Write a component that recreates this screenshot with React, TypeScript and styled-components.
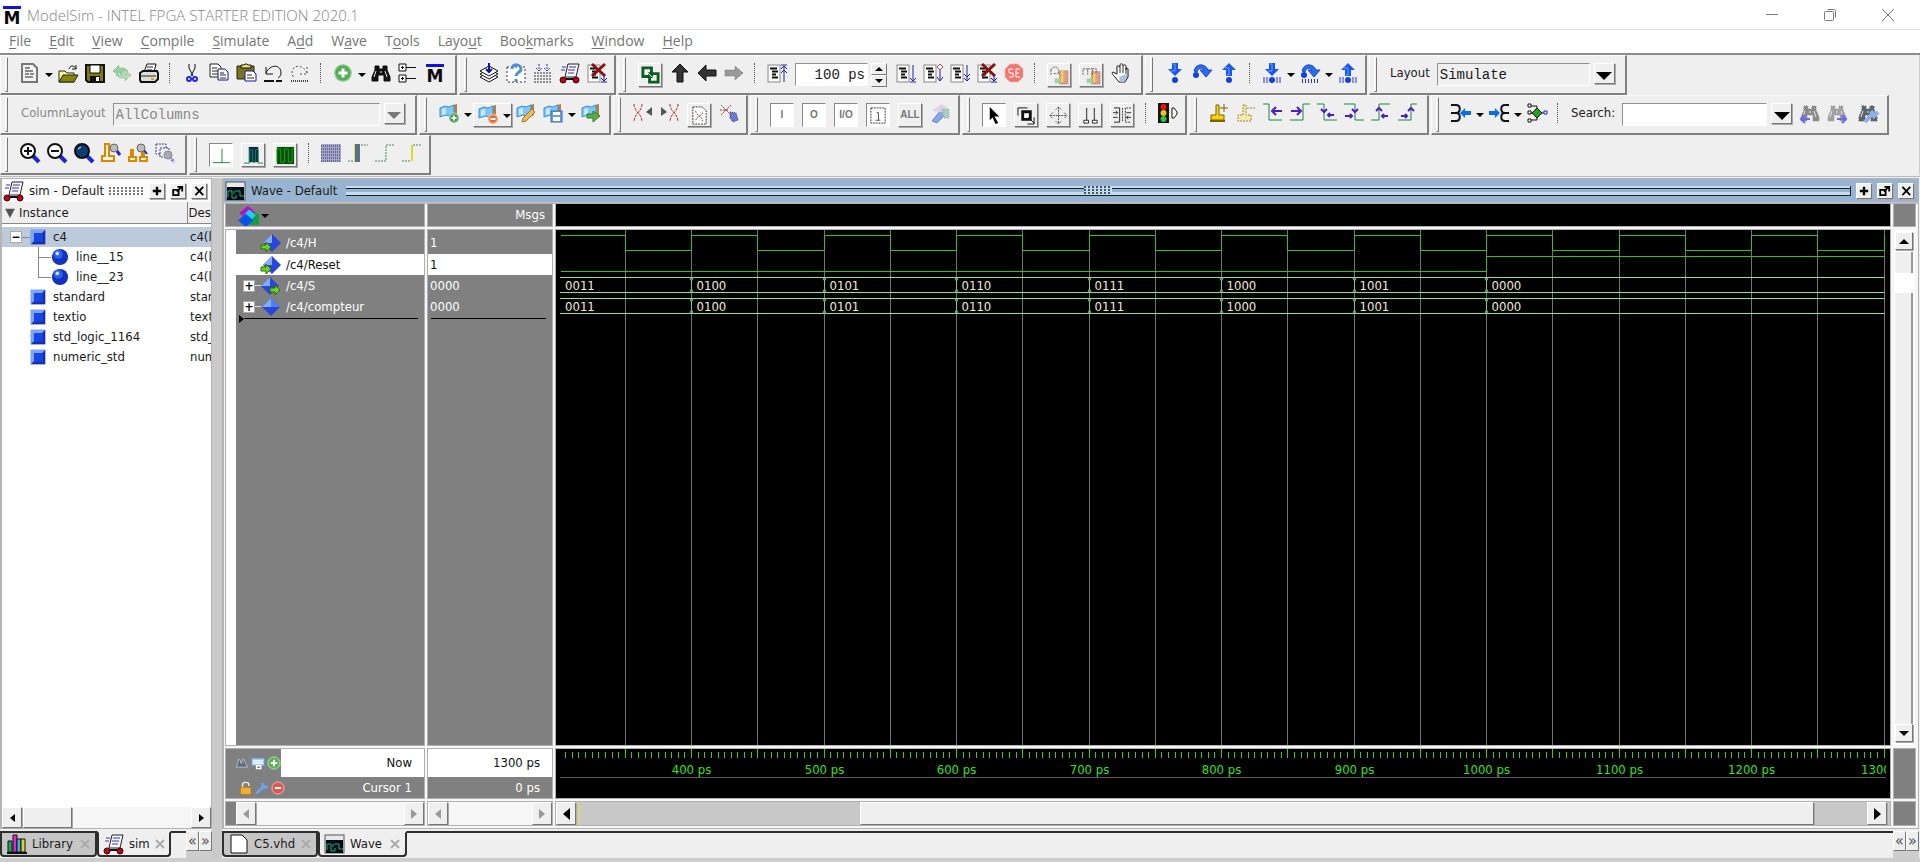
import React from 'react';
import styled, { createGlobalStyle, css } from 'styled-components';

const ui = '"DejaVu Sans Condensed", "DejaVu Sans", sans-serif';
const system = '"Open Sans", "Noto Sans", sans-serif';
const mono = '"Liberation Mono", monospace';

const Global = createGlobalStyle`
  * { box-sizing: border-box; }
  body { margin: 0; background: #efefef; color: #1a1a1a; font: 13px/20px ${ui}; overflow: hidden; }
  button, input, select { font: inherit; color: inherit; margin: 0; padding: 0; border: 0; border-radius: 0; background: none; }
  svg { display: block; flex: none; }
`;

/* ---------- drawings ---------- */

type PProps = { d: string; s?: string; f?: string; w?: number; dash?: string };
const P = ({ d, s = 'none', f = 'none', w = 1, dash }: PProps) => (
  <path d={d} stroke={s} fill={f} strokeWidth={w} strokeDasharray={dash} />
);

const Logo = () => (
  <>
    <rect x="1" y="1" width="18" height="3" fill="#1212e0" />
    <text x="10" y="19" textAnchor="middle" fontFamily="DejaVu Sans, sans-serif" fontWeight="bold" fontSize="17" fill="#0a0a0a">M</text>
  </>
);
const Plus = ({ x = 10, y = 10, r = 8, c = '#55ad55', minus = false }) => (
  <>
    <circle cx={x} cy={y} r={r} fill={c} stroke="#fff" strokeOpacity=".5" />
    <circle cx={x} cy={y} r={r - 1} fill="none" stroke="#fff" strokeOpacity=".35" />
    <path d={`M${x - r / 2} ${y}h${r}${minus ? '' : `M${x} ${y - r / 2}v${r}`}`} stroke="#fff" strokeWidth={r > 6 ? 3 : 2} />
  </>
);
const Listing = () => (
  <>
    <rect x="1" y="2" width="12" height="17" fill="#fafafa" stroke="#8a8a8a" />
    <P d="M3 5.5h7M5 8.5h6M5 11.5h4M5 14.5h6" s="#111" w={2} />
  </>
);
const Binoc = ({ c = '#111', dash = undefined as string | undefined }) => (
  <>
    <path d="M4 3h4v3h4V3h4v4l3 7v4h-6v-6h-6v6H1v-4l3-7z" fill={c} stroke={c} strokeDasharray={dash} />
    <P d="M5 8l-2 6M14 8l2 6M9 9h2" s="#e8e8e8" />
  </>
);
const Book = () => (
  <>
    <path d="M14 2l4-1v11l-4 2z" fill="#b9803c" />
    <path d="M1 5l5-2 4 1 5-2v10l-4 1-4-1-6 2z" fill="#7fc6f5" stroke="#3a8fd0" />
    <path d="M3 6l4-1v6l-4 1z" fill="#c5e8fd" />
  </>
);
const DownArrow = ({ c = '#1a56f0', flip = false }) => (
  <g transform={flip ? 'translate(0 13) scale(1 -1)' : undefined}>
    <path d="M7 0h6v6h4l-7 7-7-7h4z" fill={c} />
    <path d="M8 1h2v7H6" fill="none" stroke="#6aa4ff" />
  </g>
);
const Over = () => (
  <>
    <path d="M2 8C4 0 13 0 16 7h4l-6 7-6-7h4C10 4 6 5 5 9z" fill="#2b6df2" stroke="#1646c8" />
    <circle cx="4" cy="12" r="3" fill="#1540e0" />
  </>
);
const Bars = () => <P d="M2 14v6M5 14v6M15 14v6M18 14v6" s="#2233dd" w={1} />;
const Lens = ({ fill = '#fff' }) => (
  <>
    <P d="M13 13l6 6" s="#1b27d6" w={4} />
    <circle cx="8" cy="8" r="7" fill={fill} stroke="#111" strokeWidth="2" />
  </>
);
const Edge = ({ d, a }: { d: string; a: string }) => (
  <>
    <P d={d} s="#16893c" w={1} />
    <P d={a} s="#4a1fc4" w={2} />
  </>
);
const Waveicon = () => (
  <>
    <rect x="0" y="1" width="19" height="18" fill="#e8e8e8" stroke="#555" />
    <rect x="1" y="6" width="17" height="13" fill="#050a18" />
    <P d="M2 16v-6h4v7h4v-3M9 10h5v5h4M8 10v3" s="#19b36b" w={1} />
  </>
);
const Cart = () => (
  <>
    <path d="M8 1h11l-3 13H5z" fill="#f6f6ff" stroke="#222" strokeWidth="1" />
    <P d="M9 4h7M8 7h7M8 10h6M2 4h4M1 7h4" s="#3434b0" />
    <P d="M1 16h17" s="#111" w={2} />
    <circle cx="3" cy="17" r="3" fill="#c4001c" stroke="#300" />
    <circle cx="16" cy="17" r="3" fill="#c4001c" stroke="#300" />
  </>
);

const icons: Record<string, React.ReactNode> = {
  logo: <Logo />,
  doc: <><P d="M2 1h11l4 4v14H2z" f="#f3f3f3" s="#777" w={2} /><P d="M5 5h5M5 8h8M5 11h4M10 11h4M5 14h8" s="#222" w={1} /></>,
  open: <><P d="M1 8h6l2 2h7v9H1z" f="#fffb9a" s="#222" /><P d="M5 12h15l-4 7H1z" f="#85850a" s="#222" /><P d="M11 6c1-4 5-4 7 0M18 2v4h-4" s="#111" w={1} /></>,
  save: <><P d="M1 2h18v17H3l-2-2z" f="#7d7a12" s="#111" w={2} /><P d="M5 2h10v8H5z" f="#fff" s="#111" /><P d="M5 13h10v6H5z" f="#111" /><P d="M11 14h3v4h-3z" f="#fff" /></>,
  refresh: <><P d="M1 8l6-6v3h5l4 3h-6l2 3H8L6 8v4z" f="#9ccf9f" s="#78b87d" dash="1 1" /><P d="M19 12l-6 6v-3H8l-4-3h6l-2-3h4l2 3V8z" f="#b5dab7" s="#78b87d" dash="1 1" /></>,
  print: <><P d="M5 9l3-8h9l-2 8" f="#fff" s="#111" w={1} /><P d="M1 10l3-2h14l1 2v6l-3 3H2l-1-2z" f="#ddd" s="#111" w={2} /><P d="M1 13h16M8 4h6M8 7h5" s="#222" /><P d="M12 15h3v2h-3z" f="#c9b300" /></>,
  cut: <><P d="M7 1v4l4 8M13 1v4l-4 8" s="#111" w={1} /><circle cx="7" cy="16" r="2" fill="none" stroke="#1c2ce0" strokeWidth="2" /><circle cx="13" cy="16" r="2" fill="none" stroke="#1c2ce0" strokeWidth="2" /></>,
  copy: <><P d="M1 1h8l3 3v10H1z" f="#fff" s="#222" w={1} /><P d="M3 5h5M3 8h6M3 11h6" s="#222" /><P d="M9 6h7l3 3v8H9z" f="#fff" s="#14149a" w={1} /><P d="M11 10h4M11 12h6M11 15h6" s="#222" /></>,
  paste: <><P d="M1 3h17v13H1z" f="#77741c" s="#222" w={1} /><P d="M5 2h3l1-1h2l1 1h3v3H5z" f="#e9e26b" s="#111" /><P d="M9 8h8l3 3v7H9z" f="#fff" s="#14149a" w={1} /><P d="M11 12h5M11 15h7" s="#222" /></>,
  undo: <><P d="M3 4v7h7M3 10c4-9 15-9 15 0 0 2-1 4-3 5" s="#111" w={1} /><P d="M1 18h10M13 18h6" s="#111" w={2} /></>,
  redo: <><P d="M17 4v7h-7M17 10C13 1 2 1 2 10c0 2 1 4 3 5" s="#555" w={1} dash="2 2" /><P d="M1 18h18" s="#444" w={2} dash="1 1" /></>,
  add: <Plus r={9} />,
  binoc: <Binoc />,
  tree: <><P d="M1 1h7v7H1zM1 12h7v7H1z" f="#fff" s="#111" w={1} /><P d="M3 4.500h3M3 15.500h3M4.500 3v3M4.500 14v3M8 4.500h10M8 15.500h10" s="#111" w={1} /></>,
  layers: <><P d="M1 14l9-5 9 5-9 5z" f="#fff" s="#111" w={1} /><P d="M1 11l9-5 9 5-9 5z" f="#fff" s="#111" w={1} /><P d="M1 8l9-5 9 5-9 5z" f="#fff" s="#111" w={1} /><P d="M10 0v9M7 6l3 3 3-3" s="#1414a8" w={2} /></>,
  query: <><P d="M1 4h18v15H1z" f="#fff" s="#333" dash="2 2" w={1} /><P d="M6 6c0-6 9-5 9 0 0 4-5 3-5 7M10 16v3" s="#4b90d8" w={3} /></>,
  load: <><P d="M1 10h18M1 13h18M1 16h18M1 19h18" s="#333" w={1} dash="2 1" /><P d="M6 1v7M3 5l3 3 3-3M14 1v7M11 5l3 3 3-3" s="#2b2bb4" w={1} dash="2 1" /></>,
  cart: <Cart />,
  stopsim: <><Listing /><P d="M5 1l13 12M18 1L5 13" s="#8c1010" w={3} /><P d="M17 12v5M14 15l3 3 3-3M14 19h6" s="#1414a8" w={1} /></>,
  link: <><P d="M2 2h9v9H2z" s="#0b5c20" w={3} /><P d="M9 8h9v9H9z" s="#0b5c20" w={3} /><P d="M6 6l6 6" s="#efefef" w={1} /></>,
  up: <P d="M10 1l8 8h-5v10H7V9H2z" f="#333" s="#111" />,
  left: <P d="M1 10l8-8v5h10v6H9v5z" f="#333" s="#111" />,
  right: <P d="M19 10l-8-7v4H1v6h10v4z" f="#999" s="#777" dash="1 1" />,
  restart: <><Listing /><P d="M17 3v16M14 6l3-3 3 3M14 10l3-3 3 3M14 2h6" s="#2222a8" w={1} /></>,
  run: <><Listing /><P d="M17 2v16M14 15l3 3 3-3M14 19h6" s="#2222a8" w={1} /></>,
  runc: <><Listing /><P d="M17 7v11M14 14l3 4 3-4" s="#2222a8" w={1} /><P d="M17 1l3 3-3 3-3-3z" f="#fff" s="#e04040" /></>,
  runall: <><Listing /><P d="M17 2v16M14 11l3 3 3-3M14 15l3 3 3-3" s="#2222a8" w={1} /></>,
  stop: <><P d="M6 1h8l5 5v8l-5 5H6l-5-5V6z" f="#f0766e" s="#f6b0aa" dash="2 1" /><P d="M9 6H5v4h4v4H5M16 6h-4v8h4M12 10h3" s="#fff" w={1} /></>,
  cover: <><P d="M10 5h9v14h-9z" f="#dba08c" s="#b66" dash="1 1" /><P d="M1 4c3-5 8-3 8 1v4M1 4v5M4 8h4" s="#555" w={1} dash="2 1" /><P d="M13 4v13" s="#f2e23a" w={2} /><P d="M5 13h6v5H5z" f="#9fd29f" /></>,
  memory: <><P d="M10 6h9v13h-9z" f="#dba08c" s="#b66" dash="1 1" /><P d="M1 9V3h5v6M6 3h5v6M11 3h4v5" s="#555" w={1} dash="2 1" /><P d="M13 8v9" s="#f2e23a" w={2} /><P d="M5 13h6v5H5z" f="#9fd29f" /></>,
  hand: <><P d="M6 11L2 9c-2 1 0 3 2 5l4 5h6l3-5V6c-1-2-2-1-2 1V3c-1-2-3-1-3 0V2c-1-2-3-1-3 0v2C7 2 5 3 6 5z" f="#fff" s="#111" w={1} /><P d="M9 4v6M12 3v7M15 7v4" s="#333" /><P d="M8 14l8-3v4l-3 4H9z" f="#a9bfe6" /></>,
  into: <><DownArrow /><circle cx="10" cy="17" r="3" fill="#1540e0" /></>,
  over: <Over />,
  out: <><DownArrow flip /><circle cx="10" cy="17" r="3" fill="#1540e0" /></>,
  intob: <><DownArrow /><Bars /><circle cx="10" cy="17" r="3" fill="#1540e0" /></>,
  overb: <><Over /><P d="M2 18h17" s="#2233dd" w={4} dash="1 2" /></>,
  outb: <><DownArrow flip /><Bars /><circle cx="10" cy="17" r="3" fill="#1540e0" /></>,
  bookadd: <><Book /><Plus x={15} y={15} r={5} c="#2f9440" /></>,
  bookdel: <><Book /><Plus x={15} y={15} r={5} c="#e8692a" minus /></>,
  bookedit: <><Book /><P d="M6 19l1-4 9-9 3 3-9 9z" f="#edbb55" s="#a5762a" /></>,
  booksave: <><Book /><rect x="8" y="8" width="11" height="11" fill="#6e9bdc" stroke="#3d6db5" /><P d="M10 9h7v3h-7zM10 14h7v4h-7z" f="#fff" /></>,
  bookgo: <><Book /><P d="M6 11h6V8l7 5-7 6v-4H6z" f="#57b04a" s="#2f7d2b" /></>,
  delprev: <><P d="M1 1c0 8 8 9 8 18M9 1c0 8-8 9-8 18" s="#b32f2f" w={1} dash="3 1" /><P d="M19 4v9l-6-4z" f="#555" /></>,
  delnext: <><P d="M10 1c0 8 8 9 8 18M18 1c0 8-8 9-8 18" s="#b32f2f" w={1} dash="3 1" /><P d="M1 4v9l6-4z" f="#555" /></>,
  docx: <><P d="M3 1h10l4 4v14H3z" f="#fff" s="#333" dash="2 1" /><P d="M6 5c0 5 7 5 7 11M13 7c0 4-7 3-7 9" s="#b32f2f" w={1} dash="2 1" /></>,
  clear: <><P d="M2 2l10 10M12 2L2 12M1 7h9" s="#963434" w={1} dash="2 1" /><P d="M11 9l6 1 2 7-5 2-3-4z" f="#6b78d8" s="#334" dash="1 1" /></>,
  inout: <><P d="M2 2h15v16H2z" f="#fff" s="#333" w={1} dash="2 1" /><P d="M8 7h2v8M7 15h5" s="#555" w={1} /></>,
  brush: <><P d="M2 18l9-11 5 4-9 9z" f="#89a8ec" s="#6a8ad0" /><P d="M2 8l9-7 6 3-5 5z" f="#e3cfe8" /><P d="M12 6h7v9h-5z" f="#a7d0bb" s="#9ab" dash="1 1" /></>,
  arrow: <P d="M5 1l10 10h-5l4 7-3 1-3-7-3 3z" f="#000" />,
  zoomsel: <><P d="M1 10V2h10" s="#111" w={1} /><P d="M6 6h8v8H6z" f="#fff" s="#111" w={3} /><P d="M12 12l6 6M18 12v7h-7" s="#111" w={1} /></>,
  pan: <P d="M10 1v18M1 10h18M7 4l3-3 3 3M7 16l3 3 3-3M4 7l-3 3 3 3M16 7l3 3-3 3" s="#444" w={1} dash="2 1" />,
  cursors: <><P d="M6 2v13M14 2v13" s="#222" w={1} /><P d="M3 15h5v3H3zM12 15h5v3h-5z" f="#fff" s="#222" w={1} /></>,
  expand: <><P d="M1 2h6v15H1" s="#222" w={1} /><P d="M19 2h-6v15h6M10 2v15" s="#333" w={1} dash="2 1" /><P d="M0 7h5M0 12h5M14 7h5M14 12h5M3 5l2 2-2 2M16 10l-2 2 2 2" s="#333" w={1} /></>,
  traffic: <><rect x="0" y="0" width="11" height="20" fill="#151515" /><circle cx="5.5" cy="4" r="3" fill="#e11" /><circle cx="5.5" cy="10" r="3" fill="#e8c020" /><circle cx="5.5" cy="16" r="3" fill="#2cc24c" /><P d="M14 5h2l3 4v2l-3 4h-2z" f="#fff" s="#111" /></>,
  inscur: <><P d="M7 2h3v10h5v5H2v-5h5z" f="#f2d410" s="#806000" /><P d="M1 17h15v2H1z" f="#806000" /><P d="M11 5h8M15 1v8" s="#806000" w={1} /></>,
  delcur: <><P d="M7 2h3v10h5v6H2v-6h5z" f="#f3ebb0" s="#a08a30" dash="2 1" /><P d="M11 5h8" s="#a08a30" w={1} dash="2 1" /></>,
  prevt: <Edge d="M0 1h6v16h13" a="M19 8h-9M13 4l-4 4 4 4" />,
  nextt: <Edge d="M0 17h13V1h7" a="M1 8h9M7 4l4 4-4 4" />,
  prevf: <Edge d="M0 1h7v16h13" a="M4 6l3 3 3-3M17 12h-6M13 10l-2 2 2 2" />,
  nextf: <Edge d="M0 1h11v16h9" a="M8 6l3 3 3-3M1 13h7M6 11l2 2-2 2" />,
  prevr: <Edge d="M0 17h8V1h11" a="M5 8l3-3 3 3M17 13h-6M13 11l-2 2 2 2" />,
  nextr: <Edge d="M0 17h13V1h6" a="M10 8l3-3 3 3M3 13h6M7 11l2 2-2 2" />,
  drivers: <><P d="M0 2h5c5 0 5 8 0 8H0M5 10c5 0 5 8 0 8H0" s="#111" w={2} /><P d="M9 10l5-5v3h6v4h-6v3z" f="#0b6cf0" /></>,
  readers: <><P d="M20 2h-4c-5 0-5 8 0 8h4M16 10c-5 0-5 8 0 8h4" s="#111" w={2} /><P d="M11 10L6 5v3H0v4h6v3z" f="#0b6cf0" /></>,
  net: <><P d="M4 3h6v14H4M4 10h13" s="#111" w={1} /><P d="M1 1h3v3H1zM1 8h3v3H1zM1 16h3v3H1z" f="#fff" s="#111" /><P d="M10 5l5 5-5 5-5-5z" f="#1fa31f" s="#111" /><P d="M17 8h3v3h-3z" f="#fff" s="#12c" /></>,
  findprev: <><Binoc c="#8a8a8a" dash="1 1" /><P d="M10 16H2M5 12l-4 4 4 4" s="#6a6ae8" w={2} /></>,
  findnext: <><Binoc c="#a0a0a0" dash="1 1" /><P d="M10 16h8M15 12l4 4-4 4" s="#6a6ae8" w={2} /></>,
  findopt: <><Binoc c="#5c646c" dash="2 1" /><P d="M7 19l7-8M13 8l3 5 4-4" s="#8fb2e6" w={4} /></>,
  zin: <><Lens /><P d="M4 8h8M8 4v8" s="#111" w={2} /></>,
  zout: <><Lens /><P d="M4 8h8" s="#111" w={2} /></>,
  zfull: <><Lens fill="#0c3c74" /><P d="M4 6l3-2" s="#fff" /></>,
  zcur: <><P d="M4 1h4v12h5v5H1v-5h3z" f="#f8efe0" s="#d78a00" w={2} /><P d="M16 8l3 4" s="#1b27d6" w={3} /><circle cx="13" cy="5" r="4" fill="#bbb" stroke="#666" /></>,
  zbetw: <><P d="M3 7h2v7h3v4H1v-4h2zM14 7h2v7h3v4h-7v-4h2z" f="#f8efe0" s="#d78a00" w={2} /><P d="M16 7l3 4" s="#1b27d6" w={2} /><circle cx="13" cy="5" r="4" fill="#bbb" stroke="#666" /></>,
  zrect: <><P d="M1 1h10v4M1 1v10h4" s="#3a3aa8" w={1} dash="2 1" /><P d="M5 5h9v9H5z" s="#3a3aa8" w={1} dash="2 1" /><P d="M15 14l4 5" s="#6a6ae8" w={3} dash="2 1" /><circle cx="13" cy="12" r="4" fill="#aaa" stroke="#888" /></>,
  wlit: <P d="M1 17.500h18M10.500 3v15" s="#16893c" w={1} />,
  wlog: <><rect x="5" y="1" width="10" height="16" fill="#10285c" /><P d="M0 18h6V4h3v13h3V4h3v14h5" s="#16893c" w={1} /></>,
  wevt: <><rect x="1" y="1" width="18" height="18" fill="#045004" /><P d="M1 17V3h4v14h4V3h4v14h4V3h2" s="#1aa31a" w={1} /></>,
  e1: <><rect x="0" y="1" width="20" height="18" fill="#a6a6c8" /><P d="M0 3h20M0 6h20M0 9h20M0 12h20M0 15h20M0 18h20" s="#66669a" dash="1 1" w={2} /></>,
  e2: <><P d="M0 18h6M13 2h7" s="#3b8a60" w={1} dash="2 1" /><rect x="7" y="1" width="5" height="18" fill="#55708c" /><P d="M6.500 1v18" s="#e6e040" /></>,
  e3: <P d="M0 18h11V2h8" s="#3b8a60" w={1} dash="2 1" />,
  e4: <><P d="M0 18h9M11 2h8" s="#3b8a60" w={1} dash="2 1" /><P d="M10 2v16" s="#dcdc20" w={2} /></>,
  wave: <Waveicon />,
  books: <><P d="M1 18V7h4v11z" f="#1aa85c" s="#111" w={1} /><P d="M6 18V1h4v17z" f="#e428c8" s="#111" w={1} /><P d="M10 18V5h4v13z" f="#31b5e8" s="#111" w={1} /><P d="M14 5h4v13h-4z" f="#e0d030" s="#111" w={1} /><P d="M0 19h20" s="#111" w={2} /></>,
  page: <P d="M2 1h11l5 5v13H2z" f="#fff" s="#111" w={1} />,
  min: <P d="M4 9.500h12" s="#777" />,
  max: <><rect x="4.500" y="6.500" width="9" height="9" rx="1" fill="none" stroke="#777" /><P d="M7.500 4.500h6c2 0 2 1 2 2v6" s="#777" /></>,
  close: <P d="M4 4l12 12M16 4L4 16" s="#777" />,
  filter: <P d="M3 4h14l-7 13z" f="#555" />,
  diamonds: <><P d="M10 1l7 6-8 6-7-6z" f="#b311c8" /><P d="M13 8h7v10h-9z" f="#0fa046" /><P d="M11 4l6 5-5 6-6-6z" f="#19d3ea" /><P d="M8 8l7 6-7 6-7-6z" f="#0a52e8" /></>,
  diamond: <><P d="M10 1l9 9-9 9-9-9z" f="#2846d8" /><P d="M10 1l9 9h-9z" f="#4c83f2" /><P d="M10 1v9H1z" f="#86aef8" /></>,
  sigin: <><P d="M11 1l9 9-9 9-9-9z" f="#2846d8" /><P d="M11 1v9H2z" f="#86aef8" /><P d="M0 12h5V9l5 5-5 5v-3H0z" f="#6bd31c" s="#2c6b10" /></>,
  sigout: <><P d="M9 1l9 9-9 9-9-9z" f="#2846d8" /><P d="M9 1v9H0z" f="#86aef8" /><P d="M9 12h5V9l5 5-5 5v-3H9z" f="#6bd31c" s="#2c6b10" /></>,
  block: <><rect x="1" y="1" width="18" height="18" fill="#2a5bea" /><P d="M19 1v18H1l4-4h10V5z" f="#1a2fa8" /><P d="M1 19V1h18l-4 4H5v10z" f="#7ba4f6" /><rect x="5" y="5" width="11" height="11" fill="#1547e4" /></>,
  ball: <><circle cx="10" cy="10" r="9" fill="#1432c0" /><circle cx="8" cy="7" r="5" fill="#2d62ee" /><circle cx="7" cy="6" r="2" fill="#cfe0ff" /></>,
  unlock: <><P d="M5 9V5c0-4 9-4 9 0v2" s="#eee" w={2} /><rect x="2" y="9" width="15" height="10" fill="#f1b033" stroke="#b87c14" /></>,
  wrench: <P d="M2 18L12 8M11 3c-1 5 3 8 7 4" s="#6ba5f0" w={4} />,
  minus: <Plus r={9} c="#e0544c" minus />,
  plus: <Plus r={9} c="#58b04e" />,
  sheet: <><rect x="1" y="3" width="18" height="11" fill="#a9cdf5" stroke="#5c8fd0" /><P d="M3 7h14M3 10h14M8 14h6v4H8z" s="#fff" w={2} /></>,
  cfg: <P d="M2 16l3-11h2l2 6 3-7 6 12z" f="#5e6b80" s="#cfd6df" />,
  winplus: <P d="M10 3v14M3 10h14" s="#000" w={4} />,
  winout: <><P d="M2 8h9v9H2z" s="#000" w={3} /><P d="M8 11l8-8M9 3h8v8" s="#000" w={3} /></>,
  winx: <P d="M4 3l13 14M17 3L4 17" s="#000" w={3} />,
};

const Icon = ({ name, size = 20 }: { name: string; size?: number }) => (
  <svg width={size} height={size} viewBox="0 0 20 20" overflow="visible" aria-hidden="true">{icons[name]}</svg>
);

/* ---------- shared controls ---------- */

const raised = css`
  background: #efefef;
  border: 1px solid;
  border-color: #fff #777 #777 #fff;
  box-shadow: 1px 1px 0 #aaa;
`;

const Tri = styled.span<{ $dir?: 'up' | 'down' | 'left' | 'right'; $size?: number; $color?: string }>`
  display: block;
  width: 0;
  height: 0;
  border: ${(p) => p.$size ?? 5}px solid transparent;
  ${(p) => {
    const c = p.$color ?? '#000';
    const n = p.$size ?? 5;
    switch (p.$dir) {
      case 'up': return `border-bottom-color:${c};border-top-width:0;`;
      case 'left': return `border-right-color:${c};border-left-width:0;border-right-width:${n + 1}px;`;
      case 'right': return `border-left-color:${c};border-right-width:0;border-left-width:${n + 1}px;`;
      default: return `border-top-color:${c};border-bottom-width:0;`;
    }
  }}
`;

const SquareButton = styled.button`
  ${raised}
  display: flex;
  align-items: center;
  justify-content: center;
  flex: none;
  align-self: stretch;
  width: 20px;
`;

/* ---------- title and menu ---------- */

const Shell = styled.div`
  display: flex;
  flex-direction: column;
  height: 100vh;
  min-height: 480px;
  background: #efefef;
`;
const TitleBar = styled.header`
  display: flex;
  align-items: center;
  flex: none;
  height: 29px;
  padding: 0 3px 0 2px;
  background: #fff;
  color: #858585;
  font: 300 15px/28px ${system};
`;
const Title = styled.h1`
  flex: 1;
  margin: 0 0 0 5px;
  font: inherit;
`;
const WinButton = styled.button`
  display: flex;
  justify-content: center;
  width: 58px;
`;
const Menu = styled.nav`
  display: flex;
  flex: none;
  gap: 18px;
  height: 26px;
  padding-left: 9px;
  border-top: 1px solid #ddd;
  border-bottom: 2px solid #8c8c8c;
  background: #fff;
`;
const MenuItem = styled.button`
  height: 22px;
  color: #757575;
  font: 14px/20px ${system};
  u { text-underline-offset: 2px; }
`;

/* ---------- toolbars ---------- */

const Toolbars = styled.section`
  display: flex;
  flex-direction: column;
  flex: none;
  border-right: 1px solid #ccc;
`;
const BarRow = styled.div`
  display: flex;
  gap: 2px;
  height: 40px;
`;
const Group = styled.div<{ $w: number }>`
  display: flex;
  align-items: flex-start;
  flex: none;
  width: ${(p) => p.$w}px;
  padding-top: 7px;
  border: solid;
  border-width: 1px 2px 2px 1px;
  border-color: #fafafa #808080 #808080 #fafafa;
`;
const Grip = styled.span`
  width: 3px;
  height: 35px;
  margin: -6px 8px 0 4px;
  flex: none;
  border: 1px solid;
  border-color: #fff #777 #777 #fff;
`;
const Tool = styled.button<{ $look?: 'raised' | 'pressed' }>`
  display: flex;
  align-items: center;
  justify-content: center;
  flex: none;
  width: 27px;
  height: 20px;
  ${(p) => p.$look && css`
    width: 24px;
    height: 24px;
    margin: 0 4px;
  `}
  ${(p) => p.$look === 'raised' && raised}
  ${(p) => p.$look === 'pressed' && css`
    background: #fff;
    border: 1px solid;
    border-color: #888 #fff #fff #888;
  `}
`;
const ToolText = styled.span`
  color: #777;
  font: bold 10px/12px "Liberation Sans", sans-serif;
`;
const Caret = styled.button`
  display: flex;
  align-items: center;
  justify-content: center;
  flex: none;
  width: 11px;
  height: 23px;
`;
const Split = styled.div`
  ${raised}
  display: flex;
  width: 39px;
  height: 24px;
`;
const Sep = styled.span`
  flex: none;
  width: 1px;
  height: 20px;
  margin: 0 8px 0 7px;
  border-left: 1px dotted #555;
`;
const sunk = css`
  border: 1px solid;
  border-color: #909090 #fff #fff #909090;
`;
const Field = styled.input<{ $w: number; $right?: boolean }>`
  ${sunk}
  width: ${(p) => p.$w}px;
  height: 23px;
  padding: 0 2px;
  background: #fff;
  font: 14px/20px ${mono};
  text-align: ${(p) => (p.$right ? 'right' : 'left')};
`;
const Select = styled.select<{ $w: number }>`
  ${sunk}
  appearance: none;
  width: ${(p) => p.$w}px;
  height: 23px;
  padding: 0 2px;
  font: 14px/20px ${mono};
  &:disabled { color: #888; opacity: 1; }
`;
const DropButton = styled.button`
  ${raised}
  display: flex;
  align-items: center;
  justify-content: center;
  width: 21px;
  height: 21px;
  margin-left: 4px;
  padding-top: 4px;
`;
const Label = styled.label<{ $dim?: boolean }>`
  margin: 0 7px 0 5px;
  color: ${(p) => (p.$dim ? '#888' : '#222')};
`;
const Spin = styled.span`
  display: flex;
  flex-direction: column;
  width: 16px;
  height: 24px;
  margin: 0 5px 0 3px;
  button { ${raised} display: flex; align-items: center; justify-content: center; flex: 1; box-shadow: none; }
`;

/* Each word is an icon; "|" a divider, "v" a caret, "+" a raised and "_" a pressed button. */
const Tools = ({ items }: { items: string }) => (
  <>
    {items.split(' ').map((it, i) => {
      if (it === '|') return <Sep key={i} />;
      if (it === 'v') return <Caret key={i} aria-label="More"><Tri $size={4} /></Caret>;
      const look = it[0] === '+' ? 'raised' : it[0] === '_' ? 'pressed' : undefined;
      const name = look ? it.slice(1) : it;
      return (
        <Tool key={i} $look={look} aria-label={name}>
          {icons[name] ? <Icon name={name} size={look ? 19 : 20} /> : <ToolText>{name}</ToolText>}
        </Tool>
      );
    })}
  </>
);

/* ---------- workspace ---------- */

const Work = styled.main`
  display: flex;
  flex: 1;
  min-height: 0;
  padding: 1px 1px 0 0;
  margin-top: 1px;
  border-top: 1px solid #bbb;
  background: #efefef;
`;
const Side = styled.div`
  display: flex;
  flex-direction: column;
  flex: none;
  width: 212px;
`;
const Splitter = styled.div`
  flex: none;
  width: 10px;
  background: #cacaca;
`;
const Right = styled.div`
  display: flex;
  flex-direction: column;
  flex: 1;
  min-width: 0;
`;
const Panel = styled.section`
  display: flex;
  flex-direction: column;
  flex: 1;
  min-height: 0;
  margin-bottom: 2px;
  border: solid #b4b4b4;
  border-width: 1px 1px 1px 2px;
  background: #fff;
`;
const PanelTitle = styled.div<{ $active?: boolean }>`
  display: flex;
  align-items: center;
  flex: none;
  height: 23px;
  padding: 0 4px 0 2px;
  gap: 5px;
  background: ${(p) => (p.$active ? '#99b4d1' : '#fbfbfb')};
  white-space: nowrap;
`;
const TitleButtons = styled.span`
  display: flex;
  gap: 5px;
  button { ${raised} display: flex; align-items: center; justify-content: center; width: 16px; height: 16px; }
`;
const GripDots = styled.span`
  flex: 1;
  height: 8px;
  background: radial-gradient(circle at 1px 1px, #777 1px, transparent 1px) 0 0 / 4px 3px;
`;
const GripLines = styled.span`
  display: flex;
  align-items: center;
  justify-content: center;
  flex: 1;
  height: 10px;
  margin-left: 4px;
  border: solid #16222e;
  border-width: 0 1px 1px 0;
  background: linear-gradient(#c4def0 0 2px, #16222e 2px 3px, #99b4d1 3px 6px, #c4def0 6px 9px);
  i { width: 28px; height: 9px; background: radial-gradient(circle at 1px 1px, #456 1px, #c4def0 1px) 0 0 / 4px 3px; }
`;
const PanelButtons = () => (
  <TitleButtons>
    <button aria-label="Maximize"><Icon name="winplus" size={12} /></button>
    <button aria-label="Undock"><Icon name="winout" size={12} /></button>
    <button aria-label="Close"><Icon name="winx" size={12} /></button>
  </TitleButtons>
);

const TreeWrap = styled.div`
  flex: 1;
  min-height: 0;
  overflow: hidden;
`;
const Tree = styled.table`
  width: 100%;
  table-layout: fixed;
  border-collapse: collapse;
  th {
    padding: 0 0 0 1px;
    border: solid #888;
    border-width: 0 0 1px 1px;
    background: #efefef;
    font-weight: normal;
    text-align: left;
    overflow: hidden;
  }
  th:first-child { width: 185px; border-left: 0; }
  td { height: 20px; padding: 0 0 0 3px; overflow: hidden; white-space: nowrap; }
  td:first-child { padding: 0; }
  tbody::before { content: ''; display: block; height: 3px; }
`;
const Cell = styled.div`
  display: flex;
  align-items: center;
  height: 20px;
`;
const HeadCell = styled(Cell)`
  height: 21px;
  svg { margin-right: 2px; }
`;
const TreeRow = styled.tr<{ $on?: boolean }>`
  background: ${(p) => (p.$on ? '#bccada' : 'transparent')};
`;
const Expander = styled.button`
  width: 12px;
  height: 12px;
  flex: none;
  border: 1px solid #aaa;
  background: #fff;
  color: #000;
  font: bold 12px/8px ${ui};
`;
const Stub = styled.span<{ $w: number; $color?: string }>`
  flex: none;
  width: ${(p) => p.$w}px;
  height: 1px;
  background: ${(p) => p.$color ?? '#888'};
`;
const Branch = styled.span<{ $last?: boolean }>`
  align-self: flex-start;
  flex: none;
  width: 13px;
  height: ${(p) => (p.$last ? 11 : 20)}px;
  margin-left: 36px;
  border-left: 1px solid #888;
  background: linear-gradient(#888, #888) 0 10px / 12px 1px no-repeat;
`;
const Indent = styled.span<{ $w: number }>`
  flex: none;
  width: ${(p) => p.$w}px;
`;
const Name = styled.span<{ $gap?: number }>`
  margin-left: ${(p) => p.$gap ?? 7}px;
  white-space: nowrap;
`;

const Scroll = styled.div<{ $tone?: string; $h?: number; $end?: number }>`
  display: flex;
  flex: none;
  height: ${(p) => p.$h ?? 21}px;
  padding-right: ${(p) => p.$end ?? 0}px;
  background: ${(p) => p.$tone ?? '#f6f6f6'};
`;
const Track = styled.div<{ $from?: string; $to?: string }>`
  flex: 1;
  display: flex;
  padding: 0 ${(p) => p.$to ?? '0'} 0 ${(p) => p.$from ?? '0'};
`;
const Thumb = styled.div`
  ${raised}
  flex: 1;
`;
const YellowMark = styled.span`
  width: 2px;
  margin-left: 2px;
  background: #e0d27a;
`;

/* ---------- tabs ---------- */

const TabStrip = styled.div`
  display: flex;
  flex: none;
  height: 27px;
  background: #cdcdcd;
`;
const TabFill = styled.div`
  display: flex;
  flex: 1;
  border-top: 2px solid #2e2e2e;
  background: #efefef;
  min-width: 0;
`;
const Tab = styled.button<{ $on?: boolean; $w: number }>`
  display: flex;
  align-items: center;
  gap: 5px;
  flex: none;
  width: ${(p) => p.$w}px;
  height: 26px;
  margin-top: -2px;
  padding: 0 5px;
  border: 2px solid #2e2e2e;
  border-top-color: ${(p) => (p.$on ? '#efefef' : '#2e2e2e')};
  border-radius: 0 0 4px 4px;
  background: ${(p) => (p.$on ? '#efefef' : '#c6c6c6')};
  white-space: nowrap;
  svg:last-child { margin-left: auto; }
`;
const Steps = styled.span`
  display: flex;
  flex: none;
  height: 20px;
  button { ${raised} width: 13px; color: #555; font: 16px/14px ${ui}; box-shadow: none; }
`;
const TabX = () => (
  <svg width="10" height="10" viewBox="0 0 10 10" aria-hidden="true"><path d="M1 1l8 8M9 1L1 9" stroke="#aaa" strokeWidth="2" /></svg>
);
const Bottom = styled.footer`
  flex: none;
  height: 4px;
  background: #cdcdcd;
`;

/* ---------- wave window ---------- */

const WaveGrid = styled.div`
  display: grid;
  flex: 1;
  min-height: 0;
  grid-template-columns: 198px 124px minmax(0, 1fr) 21px;
  grid-template-rows: 22px minmax(0, 1fr) 49px 23px;
  gap: 4px;
  padding: 0 3px 3px 2px;
  border-top: 2px solid #c4c4c4;
  background: #f6f6f6;
`;
const Pane = styled.div<{ $bg?: string; $strip?: boolean }>`
  display: flex;
  flex-direction: column;
  min-width: 0;
  overflow: hidden;
  background: ${(p) => p.$bg ?? '#808080'};
  border-left: ${(p) => (p.$strip ? '10px solid #fff' : '0')};
  outline: 1px solid #b0b0b0;
  color: #fff;
`;
const PaneHead = styled.div<{ $end?: boolean }>`
  display: flex;
  align-items: center;
  justify-content: ${(p) => (p.$end ? 'flex-end' : 'flex-start')};
  height: 23px;
  padding: 0 7px 0 11px;
`;
const Signal = styled.div<{ $on?: boolean; $value?: boolean }>`
  display: flex;
  align-items: center;
  flex: none;
  height: 21px;
  padding-left: ${(p) => (p.$value ? 2 : 7)}px;
  background: ${(p) => (p.$on ? '#fff' : 'transparent')};
  color: ${(p) => (p.$on ? '#111' : '#fff')};
  &:first-child { height: 24px; padding-top: 2px; }
`;
const EndLine = styled.div`
  display: flex;
  align-items: center;
  height: 3px;
  padding: 0 6px 0 3px;
  &::after { content: ''; flex: 1; height: 1px; background: #000; }
`;
const NowRow = styled.div<{ $light?: boolean }>`
  display: flex;
  align-items: center;
  flex: ${(p) => (p.$light ? '0 0 28px' : '1')};
  background: ${(p) => (p.$light ? '#fff' : '#808080')};
  color: ${(p) => (p.$light ? '#111' : '#fff')};
`;
const NowTools = styled.span`
  display: flex;
  align-items: center;
  align-self: stretch;
  gap: 2px;
  width: 55px;
  padding-left: 9px;
  background: #808080;
`;
const NowText = styled.span`
  flex: 1;
  padding-right: 12px;
  text-align: right;
`;
const VScroll = styled.div`
  display: flex;
  flex-direction: column;
  align-items: stretch;
  background: #fff;
  padding: 2px 2px 3px 1px;
  button { ${raised} display: flex; align-items: center; justify-content: center; flex: none; height: 18px; }
`;
const VBlock = styled.div<{ $h?: number }>`
  flex: ${(p) => (p.$h ? `0 0 ${p.$h}px` : '1')};
  background: #efefef;
  border-right: 2px solid #999;
  &:first-of-type { margin: 2px 0 20px; }
`;

/* The time axis: 400 ps sits 135px from the pane's left edge, 50 ps take 66.25px. */
const X = (t: number) => Math.round(135 + (t - 400) * 1.325) + 0.5;
const range = (a: number, b: number, step: number) => {
  const out: number[] = [];
  for (let t = a; t <= b; t += step) out.push(t);
  return out;
};
const clock = range(350, 1300, 50).map((t) => `H${X(t)}V${(t / 50) % 2 ? 20.5 : 5.5}`).join('');
const busValues = ['0011', '0100', '0101', '0110', '0111', '1000', '1001', '0000'];

const Bus = ({ y }: { y: number }) => (
  <g>
    <path d={`M4 ${y}.5H${X(1300)}M4 ${y + 15}.5H${X(1300)}`} stroke="#8fe08f" />
    {busValues.map((v, i) => (
      <React.Fragment key={v}>
        {i > 0 && (
          <path
            d={`M${X(300 + i * 100) - 2} ${y}l2 4v8l-2 4M${X(300 + i * 100) + 2} ${y}l-2 4v8l2 4`}
            stroke="#7fc890" fill="none"
          />
        )}
        <text x={i ? X(300 + i * 100) + 5 : 9} y={y + 13} fill="#f2ead8">{v}</text>
      </React.Fragment>
    ))}
  </g>
);
const Plot = () => (
  <svg width="100%" height="100%" fontFamily={ui} fontSize="13">
    {range(350, 1300, 50).map((t) => <line key={t} x1={X(t)} x2={X(t)} y1="0" y2="100%" stroke="#737373" />)}
    <path d={`M5 5.500${clock}`} stroke="#33c416" fill="none" />
    <path d={`M${X(1300)} 20V5`} stroke="#33c416" />
    <path d={`M5 41.500H${X(1000)}V26.500H${X(1300)}`} stroke="#33c416" fill="none" />
    <Bus y={47} />
    <Bus y={68} />
  </svg>
);
const AxisBox = styled.div`
  flex: 1;
  margin-right: 4px;
  overflow: hidden;
`;
const Axis = () => (
  <AxisBox>
    <svg width="100%" height="49" fontFamily={ui} fontSize="13">
      {range(305, 1300, 5).map((t) => (
        <line key={t} x1={X(t)} x2={X(t)} y1={t % 50 ? 3 : 0} y2="9" stroke="#2fd016" />
      ))}
      {range(400, 1300, 100).map((t) => (
        <text key={t} x={X(t)} y="25" textAnchor="middle" fill="#35e01c">{t} ps</text>
      ))}
      <line x1="4" x2="100%" y1="28.500" y2="28.500" stroke="#5c5c5c" />
    </svg>
  </AxisBox>
);

const menus: [string, string, string][] = [
  ['', 'F', 'ile'], ['', 'E', 'dit'], ['', 'V', 'iew'], ['', 'C', 'ompile'], ['', 'S', 'imulate'], ['A', 'd', 'd'],
  ['W', 'a', 've'], ['T', 'o', 'ols'], ['Layo', 'u', 't'], ['Boo', 'k', 'marks'], ['', 'W', 'indow'], ['', 'H', 'elp'],
];

const HBar = () => (
  <Scroll $h={23}>
    <SquareButton aria-label="Scroll left"><Tri $dir="left" $color="#999" /></SquareButton>
    <Track />
    <SquareButton aria-label="Scroll right"><Tri $dir="right" $color="#999" /></SquareButton>
  </Scroll>
);

const TabSteps = () => (
  <Steps>
    <button aria-label="Previous tab">«</button>
    <button aria-label="Next tab">»</button>
  </Steps>
);

export default function App() {
  return (
    <Shell>
      <Global />
      <TitleBar>
        <Icon name="logo" />
        <Title>ModelSim - INTEL FPGA STARTER EDITION 2020.1</Title>
        <WinButton aria-label="Minimize"><Icon name="min" /></WinButton>
        <WinButton aria-label="Restore"><Icon name="max" /></WinButton>
        <WinButton aria-label="Close"><Icon name="close" /></WinButton>
      </TitleBar>
      <Menu>
        {menus.map(([a, u, b]) => <MenuItem key={a + u + b}>{a}<u>{u}</u>{b}</MenuItem>)}
      </Menu>

      <Toolbars>
        <BarRow>
          <Group $w={457}><Grip /><Tools items="doc v open save refresh print | cut copy paste undo redo | add v binoc tree logo" /></Group>
          <Group $w={157}><Grip /><Tools items="layers query load cart stopsim" /></Group>
          <Group $w={525}>
            <Grip />
            <Tools items="+link up left right | restart" />
            <Indent $w={5} />
            <Field $w={73} $right defaultValue="100 ps" aria-label="Run length" />
            <Spin>
              <button aria-label="Increase"><Tri $dir="up" $size={4} /></button>
              <button aria-label="Decrease"><Tri $size={4} /></button>
            </Spin>
            <Tools items="run runc runall stopsim stop | +cover +memory hand" />
          </Group>
          <Group $w={222}><Grip /><Tools items="into over out | intob v overb v outb" /></Group>
          <Group $w={258}>
            <Grip />
            <Label htmlFor="layout">Layout</Label>
            <Select id="layout" $w={153} defaultValue="Simulate"><option>Simulate</option></Select>
            <DropButton aria-label="Open layouts"><Tri $size={8} /></DropButton>
          </Group>
        </BarRow>
        <BarRow>
          <Group $w={417}>
            <Grip />
            <Label htmlFor="columns" $dim>ColumnLayout</Label>
            <Select id="columns" $w={267} disabled defaultValue="AllColumns"><option>AllColumns</option></Select>
            <DropButton aria-label="Open columns"><Tri $size={7} $color="#777" /></DropButton>
          </Group>
          <Group $w={192}>
            <Grip />
            <Tools items="bookadd v" />
            <Split><Tools items="bookdel v" /></Split>
            <Tools items="bookedit booksave v bookgo" />
          </Group>
          <Group $w={135}><Grip /><Tools items="delprev delnext +docx clear" /></Group>
          <Group $w={210}><Grip /><Tools items="_I _O _I/O _inout +ALL brush" /></Group>
          <Group $w={225}><Grip /><Tools items="_arrow +zoomsel +pan +cursors +expand | traffic" /></Group>
          <Group $w={240}><Grip /><Tools items="inscur delcur prevt nextt prevf nextf prevr nextr" /></Group>
          <Group $w={458}>
            <Grip />
            <Tools items="drivers v readers v net |" />
            <Label htmlFor="search">Search:</Label>
            <Field id="search" $w={145} />
            <DropButton aria-label="Search history"><Tri $size={8} /></DropButton>
            <Indent $w={4} />
            <Tools items="findprev findnext" />
            <Indent $w={4} />
            <Tools items="findopt" />
          </Group>
        </BarRow>
        <BarRow>
          <Group $w={187}><Grip /><Tools items="zin zout zfull zcur zbetw zrect" /></Group>
          <Group $w={242}><Grip /><Tools items="_wlit +wlog +wevt | e1 e2 e3 e4" /></Group>
        </BarRow>
      </Toolbars>

      <Work>
        <Side>
          <Panel>
            <PanelTitle><Icon name="cart" />sim - Default<GripDots /><PanelButtons /></PanelTitle>
            <TreeWrap>
              <Tree>
                <thead>
                  <tr>
                    <th><HeadCell><Icon name="filter" size={14} />Instance</HeadCell></th>
                    <th>Des</th>
                  </tr>
                </thead>
                <tbody>
                  <TreeRow $on>
                    <td><Cell><Indent $w={8} /><Expander aria-label="Collapse">−</Expander><Stub $w={8} /><Icon name="block" size={16} /><Name>c4</Name></Cell></td>
                    <td>c4(logic)</td>
                  </TreeRow>
                  {['line__15', 'line__23'].map((n, i) => (
                    <TreeRow key={n}>
                      <td><Cell><Branch $last={i === 1} /><Icon name="ball" size={18} /><Name>{n}</Name></Cell></td>
                      <td>c4(logic)</td>
                    </TreeRow>
                  ))}
                  {[['standard', 'standard'], ['textio', 'textio'], ['std_logic_1164', 'std_logic'], ['numeric_std', 'numeric']].map(([n, d]) => (
                    <TreeRow key={n}>
                      <td><Cell><Indent $w={28} /><Icon name="block" size={16} /><Name>{n}</Name></Cell></td>
                      <td>{d}</td>
                    </TreeRow>
                  ))}
                </tbody>
              </Tree>
            </TreeWrap>
            <Scroll>
              <SquareButton aria-label="Scroll left"><Tri $dir="left" $size={4} /></SquareButton>
              <Track $to="57%"><Indent $w={1} /><Thumb /></Track>
              <SquareButton aria-label="Scroll right"><Tri $dir="right" $size={4} /></SquareButton>
            </Scroll>
          </Panel>
          <TabStrip>
            <TabFill>
              <Tab $w={97}><Icon name="books" />Library<TabX /></Tab>
              <Tab $w={74} $on><Icon name="cart" />sim<TabX /></Tab>
            </TabFill>
            <TabSteps />
          </TabStrip>
        </Side>
        <Splitter />
        <Right>
          <Panel>
            <PanelTitle $active><Icon name="wave" />Wave - Default<GripLines><i /></GripLines><PanelButtons /></PanelTitle>
            <WaveGrid>
              <Pane><PaneHead><Icon name="diamonds" size={22} /><Caret aria-label="Signals menu"><Tri $size={4} /></Caret></PaneHead></Pane>
              <Pane><PaneHead $end>Msgs</PaneHead></Pane>
              <Pane $bg="#000" />
              <Pane />

              <Pane $strip>
                <Signal><Indent $w={18} /><Icon name="sigin" /><Name $gap={5}>/c4/H</Name></Signal>
                <Signal $on><Indent $w={18} /><Icon name="sigin" /><Name $gap={5}>/c4/Reset</Name></Signal>
                <Signal><Expander aria-label="Expand">+</Expander><Stub $w={6} $color="#ddd" /><Icon name="sigout" /><Name $gap={5}>/c4/S</Name></Signal>
                <Signal><Expander aria-label="Expand">+</Expander><Stub $w={6} $color="#ddd" /><Icon name="diamond" /><Name $gap={5}>/c4/compteur</Name></Signal>
                <EndLine><Tri $dir="right" $size={4} /></EndLine>
              </Pane>
              <Pane>
                <Signal $value>1</Signal>
                <Signal $value $on>1</Signal>
                <Signal $value>0000</Signal>
                <Signal $value>0000</Signal>
                <EndLine />
              </Pane>
              <Pane $bg="#000"><Plot /></Pane>
              <VScroll>
                <button aria-label="Scroll up"><Tri $dir="up" /></button>
                <VBlock $h={21} />
                <VBlock />
                <button aria-label="Scroll down"><Tri /></button>
              </VScroll>

              <Pane>
                <NowRow $light>
                  <NowTools><Icon name="cfg" size={14} /><Icon name="sheet" size={14} /><Icon name="plus" size={14} /></NowTools>
                  <NowText>Now</NowText>
                </NowRow>
                <NowRow>
                  <NowTools><Indent $w={2} /><Icon name="unlock" size={14} /><Icon name="wrench" size={14} /><Icon name="minus" size={14} /></NowTools>
                  <NowText>Cursor 1</NowText>
                </NowRow>
              </Pane>
              <Pane>
                <NowRow $light><NowText>1300 ps</NowText></NowRow>
                <NowRow><NowText>0 ps</NowText></NowRow>
              </Pane>
              <Pane $bg="#000"><Axis /></Pane>
              <Pane />

              <Pane><Scroll $h={23} $tone="#808080"><Indent $w={10} /><Track><Right><HBar /></Right></Track></Scroll></Pane>
              <Pane><HBar /></Pane>
              <Pane>
                <Scroll $h={23} $tone="#c8c8c8" $end={3}>
                  <SquareButton aria-label="Scroll left"><Tri $dir="left" $size={6} /></SquareButton>
                  <YellowMark />
                  <Track $from="21%" $to="4%"><Thumb /></Track>
                  <SquareButton aria-label="Scroll right"><Tri $dir="right" $size={6} /></SquareButton>
                </Scroll>
              </Pane>
              <Pane />
            </WaveGrid>
          </Panel>
          <TabStrip>
            <TabFill>
              <Tab $w={96}><Icon name="page" />C5.vhd<TabX /></Tab>
              <Tab $w={89} $on><Icon name="wave" />Wave<TabX /></Tab>
            </TabFill>
            <TabSteps />
          </TabStrip>
        </Right>
      </Work>
      <Bottom />
    </Shell>
  );
}
